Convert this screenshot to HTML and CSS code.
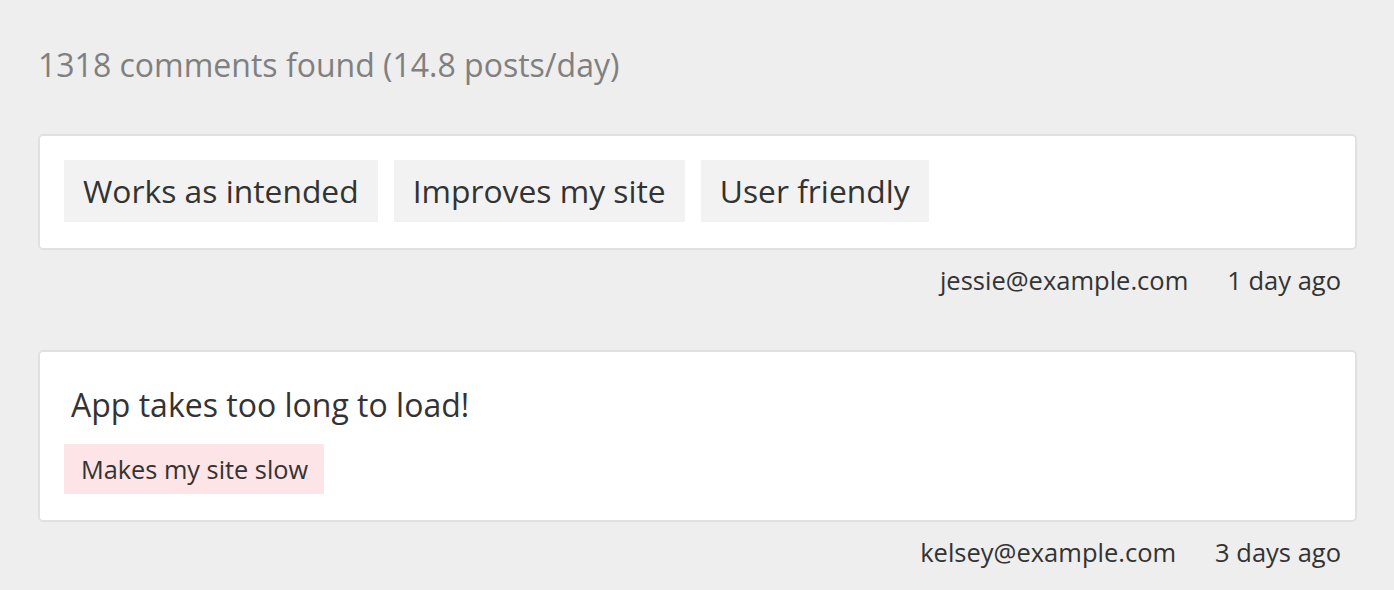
FILE: index.html
```html
<!DOCTYPE html>
<html lang="en">
<head>
  <meta charset="UTF-8">
  <title>Comments</title>
  <link rel="stylesheet" href="styles.css">
</head>
<body>
<main class="comments">
  <h2 class="comments-count">1318 comments found (14.8 posts/day)</h2>

  <div class="comment">
    <div class="comment-card">
      <div class="tags">
        <span class="tag">Works as intended</span>
        <span class="tag">Improves my site</span>
        <span class="tag">User friendly</span>
      </div>
    </div>
    <div class="comment-meta">
      <span>jessie@example.com</span>
      <span>1 day ago</span>
    </div>
  </div>

  <div class="comment">
    <div class="comment-card">
      <p class="comment-text">App takes too long to load!</p>
      <div class="tags">
        <span class="tag tag-small tag-bad">Makes my site slow</span>
      </div>
    </div>
    <div class="comment-meta">
      <span>kelsey@example.com</span>
      <span>3 days ago</span>
    </div>
  </div>
</main>
</body>
</html>
```

FILE: styles.css
```css
body {
  margin: 0;
  background-color: #eeeeee;
  font-family: 'Open Sans', sans-serif;
  color: #333;
}
.comments {
  padding: 40px 37px 0 38px;
}
.comments-count {
  margin: 0 0 44px;
  font-size: 32px;
  font-weight: normal;
  line-height: 50px;
  color: #808080;
}
.comment {
  margin-bottom: 50px;
}
.comment:last-child {
  margin-bottom: 0;
}
.comment-card {
  background: #fff;
  border: 2px solid #e0e0e0;
  border-radius: 5px;
  padding: 24px 24px 26px;
}
.comment-text {
  margin: 9px 0 19px 7px;
  font-size: 32px;
  line-height: 40px;
}
.tags {
  display: flex;
  gap: 16px;
}
.tag {
  background: #f2f2f2;
  font-size: 31.8px;
  line-height: 62px;
  padding: 0 19px;
}
.tag-small {
  font-size: 25.3px;
  line-height: 50px;
  padding: 0 16px 0 17px;
}
.tag-bad {
  background: #fde4e6;
}
.comment-meta {
  display: flex;
  justify-content: flex-end;
  gap: 39px;
  padding: 10px 16px 0 0;
  font-size: 25.5px;
  line-height: 40px;
}
```
